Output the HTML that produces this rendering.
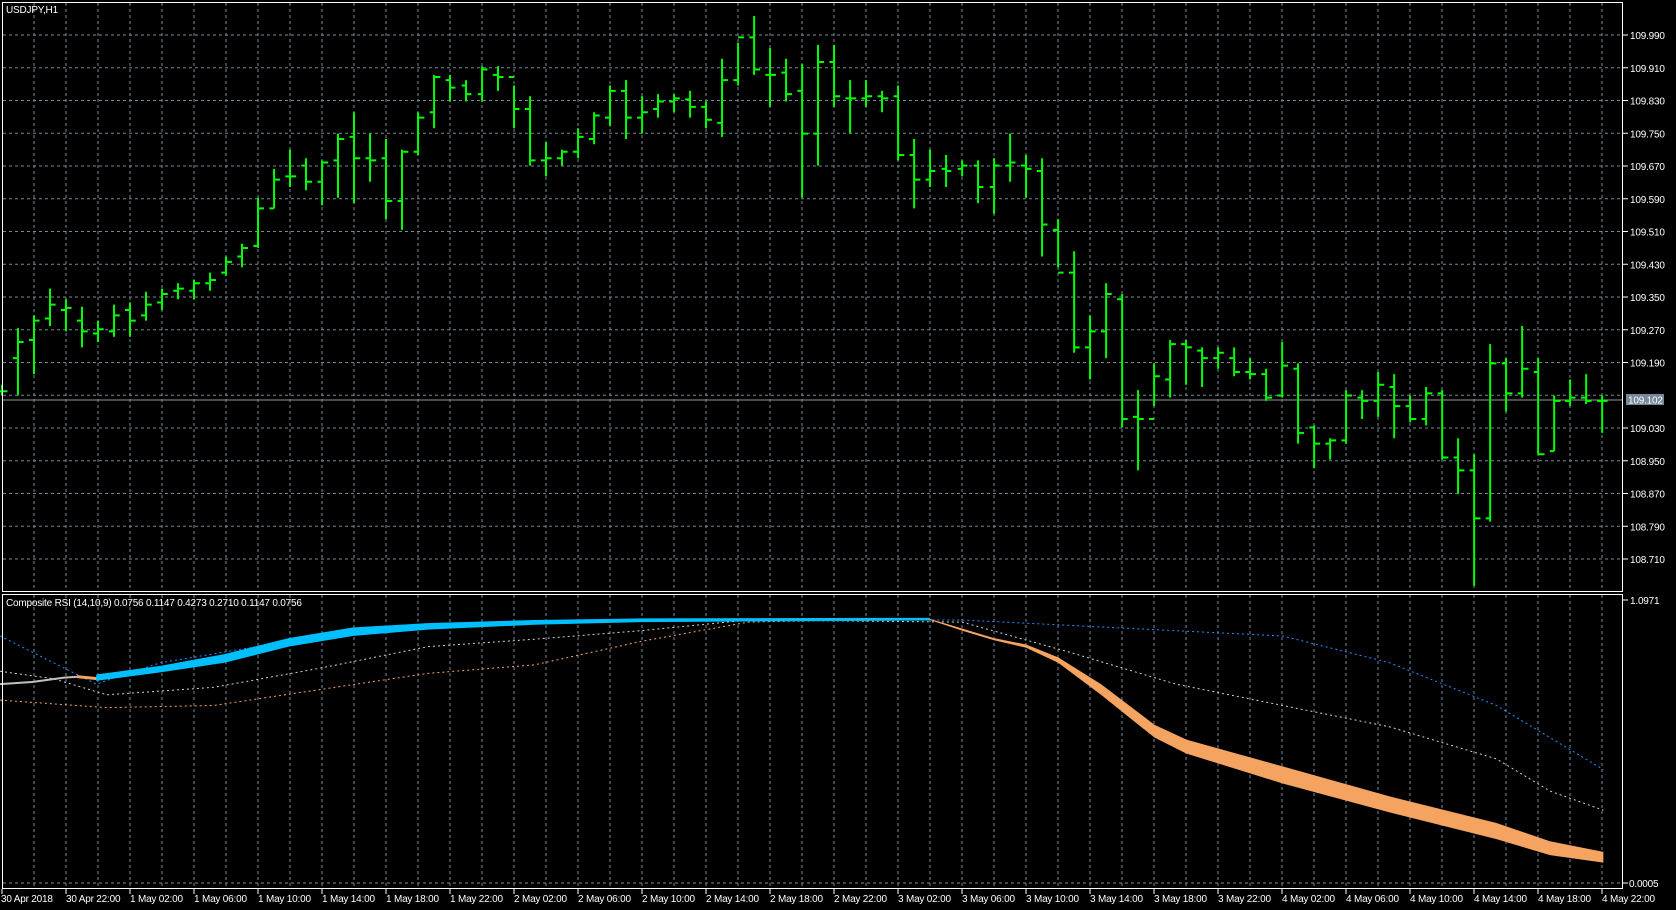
<!DOCTYPE html>
<html><head><meta charset="utf-8"><style>
html,body{margin:0;padding:0;background:#000;width:1676px;height:910px;overflow:hidden}
svg{display:block}
text{font-family:"Liberation Sans",sans-serif;font-size:10px;letter-spacing:-0.2px;fill:#fff}
</style></head><body>
<svg width="1676" height="910" viewBox="0 0 1676 910" xmlns="http://www.w3.org/2000/svg">
<rect width="1676" height="910" fill="#000"/>
<g stroke="#778899" stroke-width="1" stroke-dasharray="3,3" fill="none">
<path d="M34 3V591M66 3V591M98 3V591M130 3V591M162 3V591M194 3V591M226 3V591M258 3V591M290 3V591M322 3V591M354 3V591M386 3V591M418 3V591M450 3V591M482 3V591M514 3V591M546 3V591M578 3V591M610 3V591M642 3V591M674 3V591M706 3V591M738 3V591M770 3V591M802 3V591M834 3V591M866 3V591M898 3V591M930 3V591M962 3V591M994 3V591M1026 3V591M1058 3V591M1090 3V591M1122 3V591M1154 3V591M1186 3V591M1218 3V591M1250 3V591M1282 3V591M1314 3V591M1346 3V591M1378 3V591M1410 3V591M1442 3V591M1474 3V591M1506 3V591M1538 3V591M1570 3V591M1602 3V591"/>
<path d="M34 595V888M66 595V888M98 595V888M130 595V888M162 595V888M194 595V888M226 595V888M258 595V888M290 595V888M322 595V888M354 595V888M386 595V888M418 595V888M450 595V888M482 595V888M514 595V888M546 595V888M578 595V888M610 595V888M642 595V888M674 595V888M706 595V888M738 595V888M770 595V888M802 595V888M834 595V888M866 595V888M898 595V888M930 595V888M962 595V888M994 595V888M1026 595V888M1058 595V888M1090 595V888M1122 595V888M1154 595V888M1186 595V888M1218 595V888M1250 595V888M1282 595V888M1314 595V888M1346 595V888M1378 595V888M1410 595V888M1442 595V888M1474 595V888M1506 595V888M1538 595V888M1570 595V888M1602 595V888"/>
<path d="M3 35H1622M3 67.75H1622M3 100.5H1622M3 133.25H1622M3 166H1622M3 198.75H1622M3 231.5H1622M3 264.25H1622M3 297H1622M3 329.75H1622M3 362.5H1622M3 395.25H1622M3 428H1622M3 460.75H1622M3 493.5H1622M3 526.25H1622M3 559H1622M3 883H1622"/>
</g>
<line x1="3" y1="400" x2="1622" y2="400" stroke="#999" stroke-width="1"/>
<g transform="scale(1.0689)" fill="none">
<path vector-effect="non-scaling-stroke" stroke="#00ff00" stroke-width="2" d="
M1.9 360V370M-3 366H1.9M1.9 366H7
M16.8 307V370M12 335H16.8M16.8 320H22
M31.8 295V350M27 318H31.8M31.8 300H37
M46.8 270V305M42 298H46.8M46.8 285H52
M61.7 280V310M57 290H61.7M61.7 288H67
M76.7 287V325M72 300H76.7M76.7 310H82
M91.7 300V320M87 312H91.7M91.7 308H97
M106.7 285V315M102 310H106.7M106.7 295H112
M121.6 283V315M117 290H121.6M121.6 300H127
M136.6 273V300M132 295H136.6M136.6 285H142
M151.6 270V290M147 283H151.6M151.6 275H157
M166.5 265V280M162 272H166.5M166.5 270H172
M181.5 262V280M177 272H181.5M181.5 265H187
M196.5 255V272M192 265H196.5M196.5 262H202
M211.4 240V258M207 255H211.4M211.4 245H217
M226.4 228V250M222 240H226.4M226.4 232H232
M241.4 185V232M237 230H241.4M241.4 195H247
M256.4 158V195M252 195H256.4M256.4 168H262
M271.3 140V175M267 165H271.3M271.3 165H277
M286.3 148V178M282 155H286.3M286.3 170H292
M301.3 150V192M297 170H301.3M301.3 152H307
M316.2 125V185M312 150H316.2M316.2 130H322
M331.2 105V190M327 128H331.2M331.2 148H337
M346.2 125V170M342 148H346.2M346.2 150H352
M361.1 130V205M357 148H361.1M361.1 188H367
M376.1 140V215M372 188H376.1M376.1 142H382
M391.1 105V145M387 142H391.1M391.1 110H397
M406.1 70V120M402 105H406.1M406.1 72H412
M421 70V95M417 75H421M421 82H426
M436 75V95M432 80H436M436 88H441
M451 62V95M447 88H451M451 65H456
M465.9 62V85M461 70H465.9M465.9 72H471
M480.9 80V120M476 72H480.9M480.9 102H486
M495.9 90V155M491 102H495.9M495.9 150H501
M510.8 133V165M506 150H510.8M510.8 148H516
M525.8 140V155M521 148H525.8M525.8 142H531
M540.8 120V148M536 142H540.8M540.8 128H546
M555.8 105V135M551 130H555.8M555.8 108H561
M570.7 80V118M566 110H570.7M570.7 85H576
M585.7 75V130M581 85H585.7M585.7 110H591
M600.7 90V125M596 110H600.7M600.7 105H606
M615.6 88V110M611 102H615.6M615.6 95H621
M630.6 88V105M626 95H630.6M630.6 92H636
M645.6 85V110M641 93H645.6M645.6 100H651
M660.5 95V120M656 100H660.5M660.5 112H666
M675.5 55V128M671 115H675.5M675.5 75H681
M690.5 40V80M686 75H690.5M690.5 35H696
M705.5 15V70M701 35H705.5M705.5 65H711
M720.4 45V100M716 70H720.4M720.4 70H726
M735.4 55V95M731 68H735.4M735.4 88H741
M750.4 60V185M746 85H750.4M750.4 125H756
M765.3 42V155M761 125H765.3M765.3 58H771
M780.3 42V100M776 58H780.3M780.3 90H786
M795.3 75V125M791 92H795.3M795.3 92H801
M810.2 75V100M806 92H810.2M810.2 90H816
M825.2 85V105M821 90H825.2M825.2 92H831
M840.2 80V150M836 90H840.2M840.2 145H846
M855.2 130V195M851 145H855.2M855.2 168H861
M870.1 140V175M866 168H870.1M870.1 160H875
M885.1 145V175M881 158H885.1M885.1 160H890
M900.1 150V165M896 158H900.1M900.1 155H905
M915 150V190M911 155H915M915 175H920
M930 148V200M926 175H930M930 155H935
M945 125V170M941 155H945M945 152H950
M959.9 145V185M955 155H959.9M959.9 158H965
M974.9 148V240M970 160H974.9M974.9 210H980
M989.9 205V250M985 215H989.9M989.9 255H995
M1004.9 235V330M1000 255H1004.9M1004.9 325H1010
M1019.8 295V355M1015 325H1019.8M1019.8 310H1025
M1034.8 265V335M1030 310H1034.8M1034.8 275H1040
M1049.8 275V400M1045 280H1049.8M1049.8 392H1055
M1064.7 365V440M1060 390H1064.7M1064.7 392H1070
M1079.7 340V380M1075 392H1079.7M1079.7 352H1085
M1094.7 318V372M1090 355H1094.7M1094.7 322H1100
M1109.6 318V360M1105 322H1109.6M1109.6 325H1115
M1124.6 325V362M1120 328H1124.6M1124.6 335H1130
M1139.6 325V345M1135 335H1139.6M1139.6 330H1145
M1154.6 325V352M1150 335H1154.6M1154.6 348H1160
M1169.5 335V355M1165 348H1169.5M1169.5 350H1175
M1184.5 345V375M1180 350H1184.5M1184.5 372H1190
M1199.5 320V372M1195 370H1199.5M1199.5 342H1205
M1214.4 340V415M1210 345H1214.4M1214.4 405H1220
M1229.4 398V438M1225 400H1229.4M1229.4 415H1235
M1244.4 410V430M1240 415H1244.4M1244.4 412H1250
M1259.3 365V415M1255 412H1259.3M1259.3 370H1265
M1274.3 365V392M1270 372H1274.3M1274.3 375H1280
M1289.3 348V390M1285 375H1289.3M1289.3 360H1295
M1304.3 350V410M1300 362H1304.3M1304.3 380H1310
M1319.2 370V395M1315 380H1319.2M1319.2 392H1325
M1334.2 362V398M1330 392H1334.2M1334.2 368H1340
M1349.2 365V430M1345 368H1349.2M1349.2 428H1355
M1364.1 410V462M1360 428H1364.1M1364.1 440H1370
M1379.1 425V548M1375 440H1379.1M1379.1 485H1385
M1394.1 322V488M1390 485H1394.1M1394.1 340H1400
M1409 335V385M1405 340H1409M1409 368H1415
M1424 305V372M1420 368H1424M1424 345H1430
M1439 335V425M1435 348H1439M1439 425H1445
M1454 370V422M1450 422H1454M1454 375H1460
M1468.9 355V380M1464 375H1468.9M1468.9 372H1474
M1483.9 350V378M1479 372H1483.9M1483.9 375H1489
M1498.9 370V405M1494 375H1498.9M1498.9 375H1504"/>
<polyline vector-effect="non-scaling-stroke" stroke="#1e90ff" stroke-width="1" stroke-dasharray="2,3" points="0,595 40,615 90,640 150,620 300,595 450,582 600,580 900,580 1000,585 1100,590 1200,595 1300,620 1400,660 1500,720"/>
<polyline vector-effect="non-scaling-stroke" stroke="#d3d3d3" stroke-width="1" stroke-dasharray="2,3" points="0,628 50,635 100,650 200,643 300,625 400,605 500,598 600,590 700,580 900,582 1000,610 1100,640 1200,660 1300,680 1400,710 1450,740 1500,758"/>
<polyline vector-effect="non-scaling-stroke" stroke="#f4a460" stroke-width="1" stroke-dasharray="2,3" points="0,655 100,662 200,660 300,645 400,630 500,622 600,600 700,582 850,579"/>
<polyline vector-effect="non-scaling-stroke" stroke="#c0c0c0" stroke-width="2" points="0,640 30,638 60,634 75,633"/>
<polyline vector-effect="non-scaling-stroke" stroke="#f4a460" stroke-width="3" points="72,633 92,635"/>
<polygon fill="#00bfff" points="90,631 150,623 210,612 270,597 330,587 400,583 500,580 600,578.5 870,578 870,580.5 600,582 500,584.5 400,589 330,595 270,605 210,620 150,629 90,637"/>
<polygon fill="#f4a460" points="870,579 900,588 930,597 960,603 990,615 1030,640 1080,678 1110,692 1200,717 1300,745 1400,770 1450,787 1500,797 1500,807 1450,800 1400,785 1300,760 1200,733 1110,705 1080,690 1030,650 990,620 960,606 930,599 900,590 870,580"/>
</g>
<g stroke="#fff" stroke-width="1" fill="none">
<rect x="2.5" y="2.5" width="1620" height="589"/>
<rect x="2.5" y="594.5" width="1620" height="294"/>
<path d="M1623 35H1628M1623 67.75H1628M1623 100.5H1628M1623 133.25H1628M1623 166H1628M1623 198.75H1628M1623 231.5H1628M1623 264.25H1628M1623 297H1628M1623 329.75H1628M1623 362.5H1628M1623 428H1628M1623 460.75H1628M1623 493.5H1628M1623 526.25H1628M1623 559H1628M1623 600H1628M1623 883H1628"/>
<path d="M2 889V894M66 889V894M130 889V894M194 889V894M258 889V894M322 889V894M386 889V894M450 889V894M514 889V894M578 889V894M642 889V894M706 889V894M770 889V894M834 889V894M898 889V894M962 889V894M1026 889V894M1090 889V894M1154 889V894M1218 889V894M1282 889V894M1346 889V894M1410 889V894M1474 889V894M1538 889V894M1602 889V894"/>
</g>
<rect x="1626" y="394" width="38" height="11" fill="#778899"/>
<text x="1628" y="403.5">109.102</text>
<g>
<text x="1630" y="39">109.990</text><text x="1630" y="71.75">109.910</text><text x="1630" y="104.5">109.830</text><text x="1630" y="137.25">109.750</text><text x="1630" y="170">109.670</text><text x="1630" y="202.75">109.590</text><text x="1630" y="235.5">109.510</text><text x="1630" y="268.25">109.430</text><text x="1630" y="301">109.350</text><text x="1630" y="333.75">109.270</text><text x="1630" y="366.5">109.190</text><text x="1630" y="432">109.030</text><text x="1630" y="464.75">108.950</text><text x="1630" y="497.5">108.870</text><text x="1630" y="530.25">108.790</text><text x="1630" y="563">108.710</text>
<text x="1630" y="604">1.0971</text><text x="1629" y="887">0.0005</text>
</g>
<text x="6" y="13">USDJPY,H1</text>
<text x="6" y="606">Composite RSI (14,10,9) 0.0756 0.1147 0.4273 0.2710 0.1147 0.0756</text>
<g>
<text x="1" y="902">30 Apr 2018</text><text x="66" y="902">30 Apr 22:00</text><text x="130" y="902">1 May 02:00</text><text x="194" y="902">1 May 06:00</text><text x="258" y="902">1 May 10:00</text><text x="322" y="902">1 May 14:00</text><text x="386" y="902">1 May 18:00</text><text x="450" y="902">1 May 22:00</text><text x="514" y="902">2 May 02:00</text><text x="578" y="902">2 May 06:00</text><text x="642" y="902">2 May 10:00</text><text x="706" y="902">2 May 14:00</text><text x="770" y="902">2 May 18:00</text><text x="834" y="902">2 May 22:00</text><text x="898" y="902">3 May 02:00</text><text x="962" y="902">3 May 06:00</text><text x="1026" y="902">3 May 10:00</text><text x="1090" y="902">3 May 14:00</text><text x="1154" y="902">3 May 18:00</text><text x="1218" y="902">3 May 22:00</text><text x="1282" y="902">4 May 02:00</text><text x="1346" y="902">4 May 06:00</text><text x="1410" y="902">4 May 10:00</text><text x="1474" y="902">4 May 14:00</text><text x="1538" y="902">4 May 18:00</text><text x="1602" y="902">4 May 22:00</text>
</g>
</svg>
</body></html>
